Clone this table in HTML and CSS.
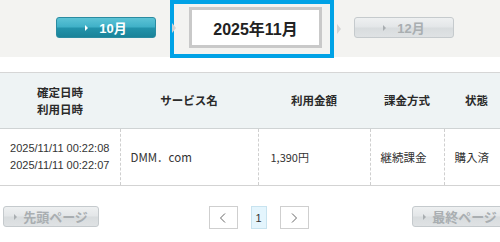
FILE: index.html
```html
<!DOCTYPE html>
<html lang="ja">
<head>
<meta charset="utf-8">
<link rel="stylesheet" href="styles.css">
</head>
<body>
<div class="page">
  <div class="band">
    <nav class="months">
      <a class="mbtn mbtn-on"><span class="tri"></span>10月</a>
      <div class="focus">
        <span class="sep sep-l"></span>
        <div class="current">2025年11月</div>
      </div>
      <span class="sep sep-r"></span>
      <a class="mbtn mbtn-off"><span class="tri"></span>12月</a>
    </nav>
  </div>

  <table class="hist">
    <colgroup>
      <col class="c1"><col class="c2"><col class="c3"><col class="c4"><col class="c5">
    </colgroup>
    <thead>
      <tr>
        <th>確定日時<br>利用日時</th>
        <th>サービス名</th>
        <th>利用金額</th>
        <th>課金方式</th>
        <th>状態</th>
      </tr>
    </thead>
    <tbody>
      <tr>
        <td class="date">2025/11/11 00:22:08<br>2025/11/11 00:22:07</td>
        <td>DMM．com</td>
        <td class="amt">1,390円</td>
        <td>継続課金</td>
        <td>購入済</td>
      </tr>
    </tbody>
  </table>

  <div class="pager">
    <a class="mbtn mbtn-off pbtn"><span class="tri"></span>先頭ページ</a>
    <div class="pages">
      <a class="pg">
        <svg width="8" height="10" viewBox="0 0 8 10"><path d="M6 0.5 L1.5 5 L6 9.5" fill="none" stroke="#666" stroke-width="1"/></svg>
      </a>
      <a class="pg pg-cur">1</a>
      <a class="pg">
        <svg width="8" height="10" viewBox="0 0 8 10"><path d="M2 0.5 L6.5 5 L2 9.5" fill="none" stroke="#666" stroke-width="1"/></svg>
      </a>
    </div>
    <a class="mbtn mbtn-off pbtn"><span class="tri"></span>最終ページ</a>
  </div>
</div>
</body>
</html>
```

FILE: styles.css
```css
html, body {
  margin: 0;
  padding: 0;
  background: #fff;
  overflow: hidden;
}
body {
  font-family: "Liberation Sans", "Noto Sans CJK JP", sans-serif;
  color: #333;
}
.page {
  width: 509px;
}
.band {
  background: #f3f3f1;
  height: 57px;
}
.months {
  display: flex;
  align-items: flex-start;
  padding-left: 56px;
}
.mbtn {
  display: flex;
  align-items: center;
  justify-content: center;
  box-sizing: border-box;
  width: 100px;
  height: 21px;
  border-radius: 3px;
  font-size: 13px;
  font-weight: bold;
  text-decoration: none;
}
.months .mbtn {
  margin-top: 17px;
}
.mbtn .tri {
  width: 0;
  height: 0;
  border-left: 3px solid currentColor;
  border-top: 3px solid transparent;
  border-bottom: 3px solid transparent;
  margin-right: 11px;
}
.mbtn-on {
  color: #fff;
  background: linear-gradient(#5cc3d6 0%, #3fb0c7 48%, #2393ab 52%, #1a8399 100%);
  border: 1px solid #2a8ba1;
}
.mbtn-off {
  color: #a9aeb1;
  background: linear-gradient(#eef0f1 0%, #e3e6e8 48%, #d8dcde 52%, #dfe2e4 100%);
  border: 1px solid #c5cacd;
}
.focus {
  display: flex;
  align-items: center;
  box-sizing: border-box;
  width: 164px;
  height: 58px;
  margin-left: 14px;
  border: 4px solid #00a2e6;
  padding: 3px 8px 6px 0;
}
.sep {
  width: 0;
  height: 0;
  border-left: 4px solid #d4d4d4;
  border-top: 5px solid transparent;
  border-bottom: 5px solid transparent;
}
.sep-l {
  margin-left: -2px;
  margin-right: 13px;
}
.sep-r {
  margin: 24px 13px 0 3px;
}
.current {
  box-sizing: border-box;
  width: 133px;
  height: 41px;
  align-self: flex-start;
  background: #fff;
  border: 3px solid #c9c9c9;
  display: flex;
  align-items: center;
  justify-content: center;
  font-size: 16px;
  font-weight: bold;
  color: #222;
}
.hist {
  margin-top: 15px;
  width: 509px;
  border-collapse: collapse;
  table-layout: fixed;
}
.c1 { width: 120px; }
.c2 { width: 138px; }
.c3 { width: 112px; }
.c4 { width: 74px; }
.c5 { width: 65px; }
.hist th {
  background: #eef3f4;
  border-top: 1px solid #d6d6d6;
  border-bottom: 1px solid #cfd3d4;
  height: 55px;
  padding: 0;
  font-family: "Noto Sans CJK JP", sans-serif;
  font-size: 11.5px;
  font-weight: bold;
  line-height: 17px;
  color: #2a2a2a;
  text-align: center;
}
.hist td {
  height: 56px;
  padding: 0 0 0 10px;
  border-bottom: 1px solid #d3d3d3;
  border-left: 1px dashed #cfcfcf;
  font-family: "Noto Sans CJK JP", sans-serif;
  font-size: 11.5px;
  color: #333;
  text-align: left;
  line-height: 16px;
}
.hist td:first-child {
  border-left: none;
  padding: 0;
  text-align: center;
}
.hist td.date {
  font-family: "Liberation Sans", sans-serif;
  font-size: 11px;
  line-height: 17px;
}
.hist td.amt {
  padding-left: 12px;
  font-size: 11px;
}
.pager {
  display: flex;
  align-items: flex-start;
  justify-content: space-between;
  margin-top: 20px;
  padding: 0 1px 0 3px;
}
.pbtn {
  width: 96px;
  font-size: 13px;
}
.pbtn .tri {
  margin-right: 6px;
}
.pages {
  display: flex;
  gap: 13px;
  margin-left: 6px;
}
.pg {
  box-sizing: border-box;
  height: 23px;
  width: 29px;
  border: 1px solid #cfcfcf;
  background: #fff;
  display: flex;
  align-items: center;
  justify-content: center;
  font-size: 11px;
  color: #333;
}
.pg-cur {
  width: 16px;
  background: #e4f5fd;
  border-color: #c8e3ef;
}
```
